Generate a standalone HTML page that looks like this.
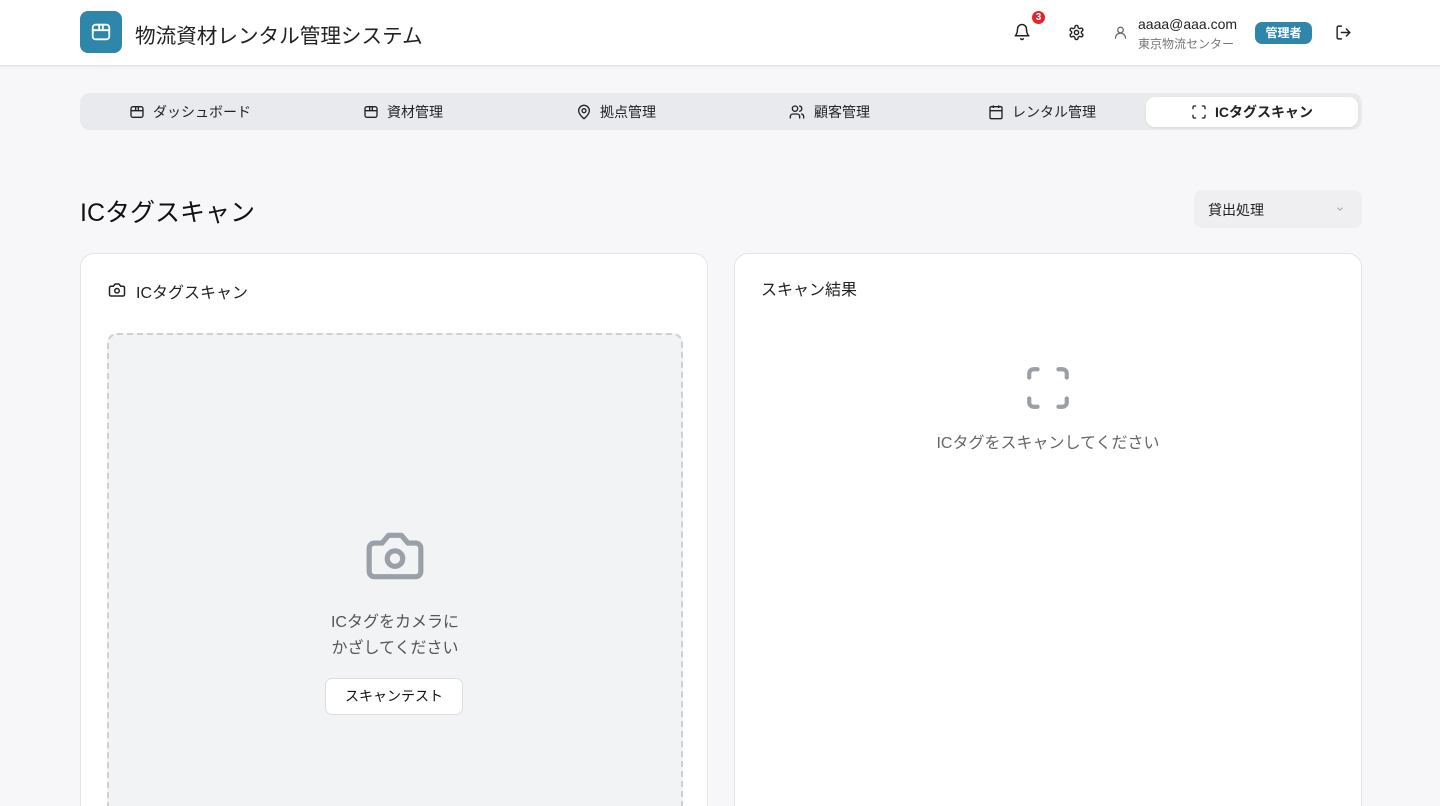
<!DOCTYPE html>
<html><head><meta charset="utf-8"><style>
*{box-sizing:border-box;margin:0;padding:0}
html,body{width:1440px;height:806px;overflow:hidden}
body{background:#f7f7f9;font-family:"Liberation Sans","Noto Sans CJK JP",sans-serif;color:#111}
.wrap{position:relative;width:1440px;height:806px;overflow:hidden}
.hdr{position:absolute;left:0;top:0;width:1440px;height:66px;background:#fff;border-bottom:1px solid #e2e3e6;box-shadow:0 1px 3px rgba(0,0,0,.06)}
.logo{position:absolute;left:80px;top:11px;width:42px;height:42px;border-radius:8px;background:#2f86ab;display:flex;align-items:center;justify-content:center}
.ttl{position:absolute;left:135px;top:19px;font-size:20.6px;color:#222}
.nav{position:absolute;left:80px;top:93px;width:1282px;height:37px;background:#e9eaee;border-radius:10px}
.tab{position:absolute;top:4px;height:30px;width:212px;display:flex;align-items:center;justify-content:center;gap:8px;font-size:14px;color:#222}
.tab.act{background:#fff;border-radius:9px;box-shadow:0 1px 2px rgba(0,0,0,.08)}
.card{position:absolute;top:253px;width:628px;height:553px;background:#fff;border:1px solid #e3e4e7;border-bottom:none;border-radius:14px 14px 0 0;overflow:hidden}
svg{display:block}
</style></head><body><div class="wrap">
<div class="hdr">
<div class="logo"><svg width="22" height="22" viewBox="0 0 24 24" fill="none" stroke="#fff" stroke-width="2" stroke-linecap="round" stroke-linejoin="round"><rect x="3" y="4" width="18" height="16" rx="3"/><path d="M3 10h18M10 4v6M14 4v6"/></svg></div>
<div class="ttl">物流資材レンタル管理システム</div>
<svg style="position:absolute;left:1013px;top:23px" width="18" height="18" viewBox="0 0 24 24" fill="none" stroke="#222" stroke-width="2" stroke-linecap="round" stroke-linejoin="round"><path d="M6 8a6 6 0 0 1 12 0c0 7 3 9 3 9H3s3-2 3-9"/><path d="M10.3 21a1.9 1.9 0 0 0 3.4 0"/></svg>
<div style="position:absolute;left:1032px;top:11px;width:13px;height:13px;border-radius:50%;background:#e5242b;color:#fff;font-size:10px;font-weight:bold;text-align:center;line-height:13px">3</div>
<svg style="position:absolute;left:1068px;top:24px" width="17" height="17" viewBox="0 0 24 24" fill="none" stroke="#222" stroke-width="2" stroke-linecap="round" stroke-linejoin="round"><path d="M12.2 2h-.4a2 2 0 0 0-2 2v.2a2 2 0 0 1-1 1.7l-.4.3a2 2 0 0 1-2 0l-.2-.1a2 2 0 0 0-2.7.7l-.2.4a2 2 0 0 0 .7 2.7l.2.1a2 2 0 0 1 1 1.7v.5a2 2 0 0 1-1 1.7l-.2.1a2 2 0 0 0-.7 2.7l.2.4a2 2 0 0 0 2.7.7l.2-.1a2 2 0 0 1 2 0l.4.3a2 2 0 0 1 1 1.7v.2a2 2 0 0 0 2 2h.4a2 2 0 0 0 2-2v-.2a2 2 0 0 1 1-1.7l.4-.3a2 2 0 0 1 2 0l.2.1a2 2 0 0 0 2.7-.7l.2-.4a2 2 0 0 0-.7-2.7l-.2-.1a2 2 0 0 1-1-1.7v-.5a2 2 0 0 1 1-1.7l.2-.1a2 2 0 0 0 .7-2.7l-.2-.4a2 2 0 0 0-2.7-.7l-.2.1a2 2 0 0 1-2 0l-.4-.3a2 2 0 0 1-1-1.7V4a2 2 0 0 0-2-2z"/><circle cx="12" cy="12" r="3"/></svg>
<svg style="position:absolute;left:1113px;top:25px" width="15" height="15" viewBox="0 0 24 24" fill="none" stroke="#666" stroke-width="2" stroke-linecap="round"><circle cx="12" cy="8" r="4.5"/><path d="M4 21a8 8 0 0 1 16 0"/></svg>
<div style="position:absolute;left:1138px;top:16px;font-size:14px;color:#222">aaaa@aaa.com</div>
<div style="position:absolute;left:1138px;top:35px;font-size:12px;color:#777">東京物流センター</div>
<div style="position:absolute;left:1255px;top:22px;width:57px;height:22px;border-radius:7px;background:#2f86ab;color:#fff;font-size:12px;font-weight:bold;text-align:center;line-height:22px">管理者</div>
<svg style="position:absolute;left:1335px;top:24px" width="17" height="17" viewBox="0 0 24 24" fill="none" stroke="#222" stroke-width="2" stroke-linecap="round" stroke-linejoin="round"><path d="M9 21H5a2 2 0 0 1-2-2V5a2 2 0 0 1 2-2h4M16 17l5-5-5-5M21 12H9"/></svg>
</div>
<div class="nav">
<div class="tab" style="left:4px"><svg width="16" height="16" viewBox="0 0 24 24" fill="none" stroke="#222" stroke-width="2"><rect x="3" y="4" width="18" height="16" rx="3"/><path d="M3 10h18M10 4v6M14 4v6"/></svg>ダッシュボード</div>
<div class="tab" style="left:217px"><svg width="16" height="16" viewBox="0 0 24 24" fill="none" stroke="#222" stroke-width="2"><rect x="3" y="4" width="18" height="16" rx="3"/><path d="M3 10h18M10 4v6M14 4v6"/></svg>資材管理</div>
<div class="tab" style="left:430px"><svg width="16" height="16" viewBox="0 0 24 24" fill="none" stroke="#222" stroke-width="2"><path d="M20 10c0 6-8 12-8 12s-8-6-8-12a8 8 0 0 1 16 0z"/><circle cx="12" cy="10" r="3"/></svg>拠点管理</div>
<div class="tab" style="left:643px"><svg width="18" height="16" viewBox="0 0 24 24" fill="none" stroke="#222" stroke-width="2" stroke-linecap="round"><circle cx="9" cy="7" r="4"/><path d="M2 21v-2a4 4 0 0 1 4-4h6a4 4 0 0 1 4 4v2M16 3.1a4 4 0 0 1 0 7.8M22 21v-2a4 4 0 0 0-3-3.9"/></svg>顧客管理</div>
<div class="tab" style="left:856px"><svg width="16" height="16" viewBox="0 0 24 24" fill="none" stroke="#222" stroke-width="2"><rect x="3" y="4" width="18" height="18" rx="2"/><path d="M16 2v4M8 2v4M3 10h18"/></svg>レンタル管理</div>
<div class="tab act" style="left:1066px"><svg width="16" height="16" viewBox="0 0 24 24" fill="none" stroke="#222" stroke-width="2" stroke-linecap="round"><path d="M3 7V5a2 2 0 0 1 2-2h2M17 3h2a2 2 0 0 1 2 2v2M21 17v2a2 2 0 0 1-2 2h-2M7 21H5a2 2 0 0 1-2-2v-2"/></svg><span style="font-weight:bold">ICタグスキャン</span></div>
</div>
<div style="position:absolute;left:80px;top:193px;font-size:25px;color:#111">ICタグスキャン</div>
<div style="position:absolute;left:1194px;top:190px;width:168px;height:38px;background:#efeff2;border-radius:8px;font-size:14px;padding:10px 14px;color:#222">貸出処理<svg style="position:absolute;right:16px;top:14px" width="12" height="10" viewBox="0 0 24 24" fill="none" stroke="#aaa" stroke-width="2.5"><path d="M6 9l6 6 6-6"/></svg></div>
<div class="card" style="left:80px">
<svg style="position:absolute;left:26px;top:27px" width="20" height="18" viewBox="0 0 24 24" fill="none" stroke="#222" stroke-width="2" stroke-linejoin="round"><path d="M14.5 4h-5L7 7H4a2 2 0 0 0-2 2v9a2 2 0 0 0 2 2h16a2 2 0 0 0 2-2V9a2 2 0 0 0-2-2h-3z"/><circle cx="12" cy="13" r="3"/></svg>
<div style="position:absolute;left:55px;top:25px;font-size:16px;color:#222">ICタグスキャン</div>
<div style="position:absolute;left:26px;top:79px;width:576px;height:474px;background:#f2f3f5;border:2px dashed #cfd0d4;border-bottom:none;border-radius:10px 10px 0 0">
<svg style="position:absolute;left:252px;top:190px" width="68" height="62" viewBox="0 0 24 24" fill="none" stroke="#9aa0a8" stroke-width="2" stroke-linejoin="round"><path d="M14.5 4h-5L7 7H4a2 2 0 0 0-2 2v9a2 2 0 0 0 2 2h16a2 2 0 0 0 2-2V9a2 2 0 0 0-2-2h-3z"/><circle cx="12" cy="13" r="3"/></svg>
<div style="position:absolute;left:0;width:572px;top:275px;text-align:center;font-size:16px;line-height:26px;color:#555">ICタグをカメラに<br>かざしてください</div>
<div style="position:absolute;left:216px;top:343px;width:138px;height:37px;background:#fff;border:1px solid #dcdde0;border-radius:7px;text-align:center;line-height:35px;font-size:14px;color:#111">スキャンテスト</div>
</div>
</div>
<div class="card" style="left:734px">
<div style="position:absolute;left:26px;top:22px;font-size:16px;color:#222">スキャン結果</div>
<svg style="position:absolute;left:288px;top:109px" width="50" height="50" viewBox="0 0 24 24" fill="none" stroke="#9aa0a8" stroke-width="2" stroke-linecap="round"><path d="M3 7V5a2 2 0 0 1 2-2h2M17 3h2a2 2 0 0 1 2 2v2M21 17v2a2 2 0 0 1-2 2h-2M7 21H5a2 2 0 0 1-2-2v-2"/></svg>
<div style="position:absolute;left:0;width:626px;top:175px;text-align:center;font-size:16px;color:#666">ICタグをスキャンしてください</div>
</div>
</div></body></html>
